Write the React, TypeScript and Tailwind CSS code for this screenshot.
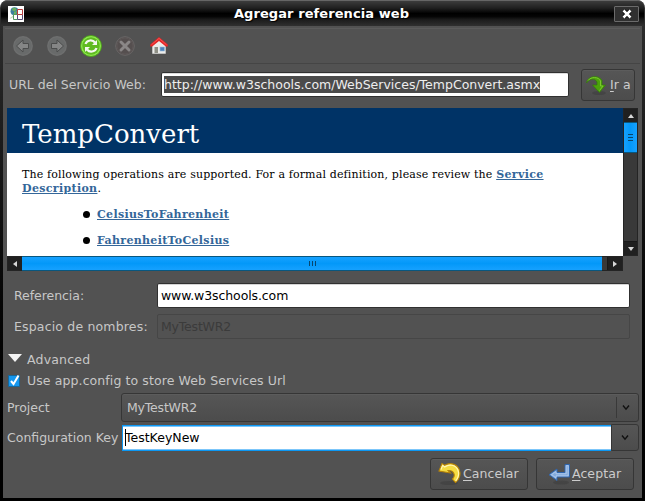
import type { ReactNode } from "react";

function TitleBar() {
  return (
    <header className="flex h-[26px] shrink-0 items-center rounded-t-md border-t border-[#666] bg-[linear-gradient(#3c3c3c_0%,#202020_28%,#000_50%,#050505_62%,#1c1c1c_75%,#303030_100%)] pr-[5px] pl-[7px]">
      <svg width="16" height="16" viewBox="0 0 16 16" className="mt-px">
        <rect width="16" height="16" fill="#fff" />
        <circle cx="6.5" cy="5.2" r="4" fill="#3c7f9d" />
        <path d="M4 2.500l3-1 1.500 2-2 2-2-1zM6 6l3-1-1 3-2 .5z" fill="#6bb15f" />
        <path d="M1.500 12.500l3.500-3 1 1-3 2z" fill="#c1d9bb" />
        <path d="M5.500 8.500h4v5h-4z" fill="#fff" stroke="#4f995f" />
        <path d="M9.500 8.500h5v5h-5z" fill="#fff" stroke="#554975" />
        <path d="M9.500 3.500h5v5h-5z" fill="#fff" stroke="#b63b3b" />
      </svg>
      <h1 className="flex-1 pl-[5px] text-center text-[13px] leading-4 font-bold tracking-[0.08px] text-white [text-shadow:1px_1px_1px_#000]">
        Agregar referencia web
      </h1>
      <button className="mt-px flex h-4 w-[25px] items-center justify-center rounded-[1px] border border-[#6b6b6b] bg-[#303030]">
        <svg width="10" height="10" viewBox="0 0 10 10">
          <path d="M2 2l6 6M8 2l-6 6" stroke="#000" strokeWidth="4" />
          <path d="M1.500 1.500l7 7M8.500 1.500l-7 7" stroke="#fff" strokeWidth="2.500" />
        </svg>
      </button>
    </header>
  );
}

function Toolbar() {
  return (
    <nav className="mx-[2px] mt-[2px] flex h-9 shrink-0 items-center gap-[14px] border-t border-b border-t-[#5c5c5c] border-b-[#454545] pl-[8px]">
      <svg width="20" height="20" viewBox="0 0 20 20">
        <circle cx="10" cy="10" r="9.900" fill="#6e6f6f" />
        <circle cx="10" cy="10" r="8.500" fill="#686a6a" />
        <path d="M3.500 10l6.500-6v3.500h5.500v5H10V16z" fill="#858686" stroke="#4b4c4c" />
      </svg>
      <svg width="20" height="20" viewBox="0 0 20 20">
        <circle cx="10" cy="10" r="9.900" fill="#6e6f6f" />
        <circle cx="10" cy="10" r="8.500" fill="#686a6a" />
        <path d="M16.500 10L10 4v3.500H4.500v5H10V16z" fill="#858686" stroke="#4b4c4c" />
      </svg>
      <svg width="22" height="22" viewBox="0 0 22 22" className="-mx-px">
        <circle cx="11" cy="11" r="10.500" fill="#8de84e" stroke="#4b9f16" strokeWidth=".9" />
        <circle cx="11" cy="11" r="8.700" fill="#5fba20" />
        <path d="M5.500 9C7 4.800 12.500 4.300 15 7.500" fill="none" stroke="#f3f7ee" strokeWidth="2.200" />
        <path d="M17 5v5h-5z" fill="#f3f7ee" />
        <path d="M16.500 13C15 17.200 9.500 17.700 7 14.500" fill="none" stroke="#f3f7ee" strokeWidth="2.200" />
        <path d="M5 17v-5h5z" fill="#f3f7ee" />
      </svg>
      <svg width="20" height="20" viewBox="0 0 20 20">
        <circle cx="10" cy="10" r="9.300" fill="#554f4f" stroke="#6a6767" />
        <circle cx="10" cy="10" r="8" fill="none" stroke="#5d5757" />
        <path d="M6 6l8 8M14 6l-8 8" stroke="#8a8787" strokeWidth="3" strokeLinecap="round" />
      </svg>
      <svg width="20" height="20" viewBox="0 0 20 20">
        <path d="M3.500 9L10 3l6.500 6v8.500h-13z" fill="#ececea" stroke="#ddd" strokeWidth=".5" />
        <path d="M1.200 10.500v-2L10 1l8.800 7.500v2h-2L10 5l-6.800 5.500z" fill="#e62626" />
        <path d="M2.500 8.700L10 2.400l7.500 6.300" fill="none" stroke="#fb6464" strokeWidth=".7" />
        <rect x="5.500" y="11" width="3.500" height="6" fill="#8f9086" />
        <rect x="11" y="11" width="4.500" height="4" fill="#4c83ba" stroke="#9abbdd" strokeWidth=".6" />
      </svg>
    </nav>
  );
}

function ActionButton({ icon, children, width }: { icon: ReactNode; children: ReactNode; width: string }) {
  return (
    <button className={`flex h-8 shrink-0 items-center rounded-[3px] border border-[#363636] bg-linear-to-b from-[#565656] to-[#4c4c4c] text-[#ccc] shadow-[inset_0_1px_#5c5c5c] ${width}`}>
      {icon}
      {children}
    </button>
  );
}

function Mnemonic({ first, rest }: { first: string; rest: string }) {
  return (
    <span className="-mt-px tracking-[0.08px] whitespace-nowrap">
      <span className="underline decoration-1 underline-offset-2">{first}</span>
      {rest}
    </span>
  );
}

function AddressRow() {
  return (
    <section className="flex h-11 shrink-0 items-start pt-[5px] pl-[6px]">
      <label className="mt-2 w-[152px] text-[#c7c7c7]">URL del Servicio Web:</label>
      <div className="mt-[3px] mr-3 h-[25px] w-[408px] rounded-[2px] border border-[#303030] bg-white p-[2px] pt-[3px] text-[#eee] shadow-[inset_0_1px_#dcdcdc]">
        <span className="block h-[17px] w-[376px] bg-[#4b4b4b] leading-[17px] whitespace-nowrap">
          http://www.w3schools.com/WebServices/TempConvert.asmx
        </span>
      </div>
      <ActionButton
        width="w-[54px]"
        icon={
          <svg width="28" height="28" viewBox="0 0 28 28" className="shrink-0">
            <ellipse cx="17" cy="22" rx="7" ry="2" fill="#333" opacity=".35" />
            <path d="M4.500 12C5.500 4.500 17 3.500 20 9.500V14h3.500L17.500 21.500 10.500 14H15v-3C13 7 7.500 7.500 4.500 12z" fill="#4ca30c" stroke="#337d08" strokeWidth=".7" />
            <path d="M6 9.500C9 5.500 16.500 5.500 18.500 10v5H21l-3.500 4.500" fill="none" stroke="#7cc730" />
          </svg>
        }
      >
        <Mnemonic first="I" rest="r a" />
      </ActionButton>
    </section>
  );
}

function Arrow({ className }: { className: string }) {
  return (
    <svg width="6" height="6" viewBox="0 0 6 6" className={className}>
      <path d="M0 5L3 1l3 4z" fill="#d8d8d8" />
    </svg>
  );
}

function WebPreview() {
  return (
    <section className="mx-1 grid h-[163px] w-[631px] shrink-0 grid-cols-[616px_15px] grid-rows-[148px_15px]">
      <article className="overflow-hidden bg-white font-['DejaVu_Serif',serif] text-[11px] leading-[14px] text-black">
        <h2 className="h-[45px] bg-[#003366] pl-[15px] text-[26px] leading-[52px] text-white">TempConvert</h2>
        <p className="pt-[15px] pl-[15px] whitespace-nowrap">
          <span className="tracking-[0.145px]">The following operations are supported. For a formal definition, please review the </span>
          <a className="font-bold tracking-[0.34px] text-[#336699] underline">Service<br />Description</a>.
        </p>
        <ul className="mt-3 space-y-3 pl-[76px] font-bold tracking-[0.32px] text-[#336699]">
          {["CelsiusToFahrenheit", "FahrenheitToCelsius"].map((name) => (
            <li key={name} className="flex items-center">
              <i className="-mt-[2px] mr-[7px] size-[7px] rounded-full bg-black" />
              <a className="underline">{name}</a>
            </li>
          ))}
        </ul>
      </article>
      <div className="flex flex-col border border-[#242424] bg-[#393939]">
        <div className="flex h-[13px] items-center justify-center bg-[#202020]"><Arrow className="" /></div>
        <div className="flex h-[31px] items-center justify-center border-y border-[#08577f] bg-linear-to-r from-[#15a1ff] via-[#0398f9] to-[#15a1ff]">
          <div className="h-[7px] w-[5px] bg-[repeating-linear-gradient(#09466c_0_1px,transparent_1px_3px)]" />
        </div>
        <div className="flex-1" />
        <div className="flex h-[14px] items-center justify-center border-t border-[#191919] bg-[#202020]"><Arrow className="rotate-180" /></div>
      </div>
      <div className="flex border border-[#242424] bg-[#393939]">
        <div className="flex w-[14px] items-center justify-center bg-[#202020]"><Arrow className="-rotate-90" /></div>
        <div className="-my-px flex w-[580px] items-center justify-center border-y border-[#08577f] bg-linear-to-b from-[#15a1ff] via-[#0398f9] to-[#15a1ff]">
          <div className="h-[5px] w-[7px] bg-[repeating-linear-gradient(90deg,#09466c_0_1px,transparent_1px_3px)]" />
        </div>
        <div className="flex-1" />
        <div className="flex w-[15px] items-center justify-center border-l border-[#191919] bg-[#202020]"><Arrow className="rotate-90" /></div>
      </div>
    </section>
  );
}

function Chevron() {
  return (
    <svg width="8" height="7" viewBox="0 0 8 7">
      <path d="M1 1.500L4 5.200l3-3.700" fill="none" stroke="#111" strokeWidth="1.400" />
    </svg>
  );
}

function Settings() {
  return (
    <>
      <section className="mt-3 grid h-[56px] shrink-0 grid-cols-[143px_473px] grid-rows-[25px_25px] gap-y-[6px] pl-[11px] leading-[25px]">
        <label className="tracking-[-0.05px]">Referencia:</label>
        <div className="rounded-[2px] border border-[#303030] bg-white pl-[3px] leading-[23px] tracking-[-0.1px] text-black shadow-[inset_0_1px_#d5d5d5]">www.w3schools.com</div>
        <label className="tracking-[0.17px] whitespace-nowrap">Espacio de nombres:</label>
        <div className="rounded-[2px] border border-[#464646] pl-[3px] leading-[23px] tracking-[-0.2px] text-[#3b3b3b]">MyTestWR2</div>
      </section>
      <div className="mt-[10px] flex h-5 shrink-0 items-center pl-[5px] tracking-[0.2px]">
        <svg width="14" height="8" viewBox="0 0 14 8" className="-mt-[2px] mr-[5px]">
          <path d="M0 0h14L7 8z" fill="#f4f4f4" />
        </svg>
        Advanced
      </div>
      <label className="mt-px flex h-5 shrink-0 items-center pl-[5px] tracking-[0.1px]">
        <svg width="13" height="13" viewBox="0 0 13 13" className="mr-[6px]">
          <path d="M.5 1.500h11v11H.5z" fill="#1597ef" stroke="#16679b" />
          <path d="M3 7l2.500 3L10.500 1.500" fill="none" stroke="#fff" strokeWidth="2" />
        </svg>
        Use app.config to store Web Services Url
      </label>
      <div className="mt-[3px] flex h-[29px] shrink-0 items-center pl-1">
        <span className="w-[114px]">Project</span>
        <div className="flex h-[29px] w-[518px] items-center rounded-[3px] border border-[#363636] bg-linear-to-b from-[#565656] to-[#4c4c4c] pl-[5px] shadow-[inset_0_1px_#5c5c5c]">
          <span className="flex-1 tracking-[-0.2px]">MyTestWR2</span>
          <i className="mr-[5px] h-[21px] w-px bg-[#393939]" />
          <Chevron />
          <i className="w-[8px]" />
        </div>
      </div>
      <div className="mt-[2px] flex h-[27px] shrink-0 items-center pl-1">
        <span className="w-[115px] whitespace-nowrap">Configuration Key</span>
        <div className="flex h-[26px] w-[489px] items-center border border-r-0 border-[#0c98f4] bg-white pl-[2px] text-black shadow-[inset_0_1px_#7cc6fa,inset_0_-1px_#7cc6fa]">
          <i className="h-[17px] w-px bg-black" />
          <span className="-ml-px">TestKeyNew</span>
        </div>
        <div className="flex h-[27px] w-7 items-center justify-center rounded-r-[3px] border border-[#363636] bg-linear-to-b from-[#565656] to-[#4c4c4c]">
          <Chevron />
        </div>
      </div>
      <footer className="mt-[7px] flex shrink-0 gap-2 pl-[427px]">
        <ActionButton
          width="w-[98px]"
          icon={
            <svg width="32" height="30" viewBox="0 0 32 30" className="shrink-0">
              <ellipse cx="18" cy="24" rx="9" ry="2" fill="#333" opacity=".35" />
              <path d="M8 12L11 4.500l2.500 1.800C18 3.500 25 4 28 10c2.500 6-.5 11-3.500 13.500L21.500 20C25 16.500 23 11 17 11.500l2.500 2.500z" fill="#f5dc42" stroke="#b78308" strokeWidth="1.100" />
              <path d="M10 10.500l1.700-4 2 1.500c4-3 10.500-2.500 13 2.500 2 4.500 .5 8.500-2 11.500" fill="none" stroke="#fff6b4" strokeWidth="1.200" />
            </svg>
          }
        >
          <Mnemonic first="C" rest="ancelar" />
        </ActionButton>
        <ActionButton
          width="w-[98px]"
          icon={
            <svg width="35" height="30" viewBox="0 0 35 30" className="shrink-0">
              <ellipse cx="24" cy="23.500" rx="8" ry="2" fill="#333" opacity=".35" />
              <path d="M28 5.500h4.500V18H20v3.500L12 15.700l8-5.700v3.500h8z" fill="#82aadc" stroke="#2f65ad" />
              <path d="M29.200 6.700h2v10.100H19v2l-4.500-3.200 4.500-3v2.200h10.200z" fill="none" stroke="#b5cef0" strokeWidth=".8" />
            </svg>
          }
        >
          <Mnemonic first="A" rest="ceptar" />
        </ActionButton>
      </footer>
    </>
  );
}

export default function App() {
  return (
    <main className="h-[501px] w-[645px] bg-white font-['DejaVu_Sans',sans-serif]">
      <div className="flex h-full flex-col overflow-hidden rounded-t-lg bg-linear-to-b from-[#303030] to-black px-px pb-[3px] text-[12.5px] leading-[15px] text-[#c7c7c7]">
        <TitleBar />
        <div className="ml-[2px] flex w-[639px] flex-1 flex-col bg-[#525252]">
          <Toolbar />
          <AddressRow />
          <WebPreview />
          <Settings />
        </div>
      </div>
    </main>
  );
}
